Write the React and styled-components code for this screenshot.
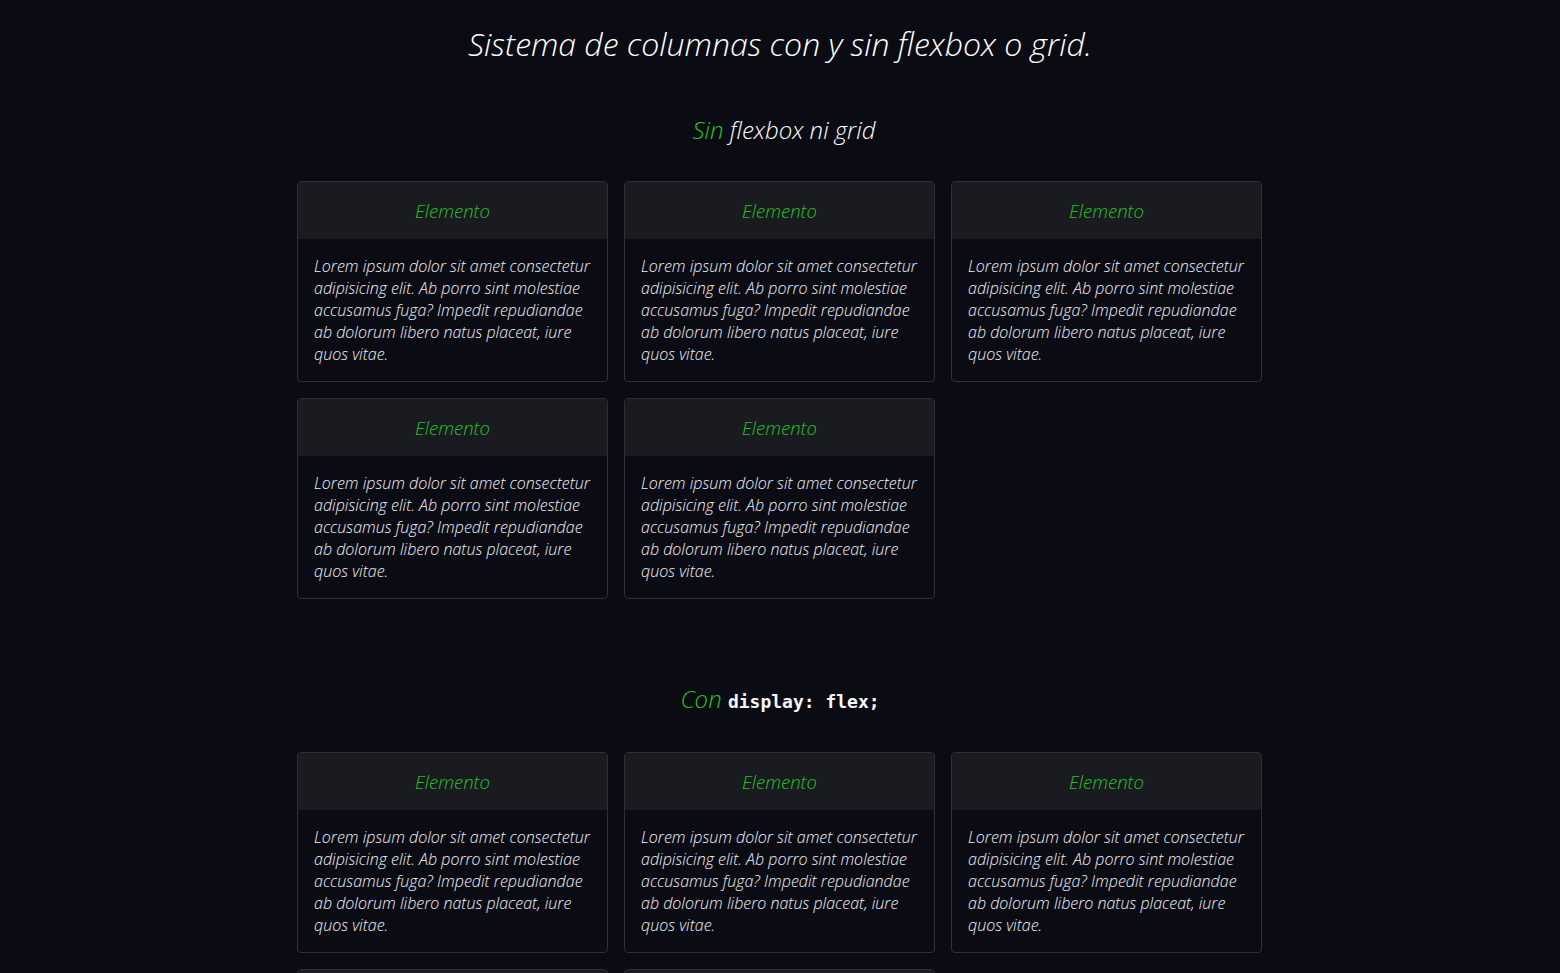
import React from "react";
import styled, { createGlobalStyle } from "styled-components";

const GlobalStyle = createGlobalStyle`
  * { box-sizing: border-box; }
  body {
    margin: 0;
    background: #0b0c13;
    color: #f2f3fa;
    font-family: "Open Sans", "Liberation Sans", sans-serif;
    font-weight: 300;
    font-style: italic;
  }
`;

const LOREM =
  "Lorem ipsum dolor sit amet consectetur adipisicing elit. Ab porro sint molestiae accusamus fuga? Impedit repudiandae ab dolorum libero natus placeat, iure quos vitae.";

const Page = styled.main`
  padding: 25px 0 40px;
`;

const Title = styled.h1`
  margin: 0 0 52px;
  font-size: 32px;
  line-height: 38px;
  font-weight: 300;
  text-align: center;
  color: #ffffff;
`;

const Section = styled.section`
  width: 966px;
  margin: 0 auto 69px;
`;

const Heading = styled.h2`
  margin: 0 0 ${(p) => (p.$code ? "35px" : "36px")};
  padding-left: ${(p) => (p.$code ? "0" : "8px")};
  font-size: 24px;
  line-height: 30px;
  font-weight: 300;
  text-align: center;
  color: #ffffff;
`;

const Green = styled.span`
  color: #20c420;
`;

const Code = styled.code`
  font-family: "DejaVu Sans Mono", "Liberation Mono", monospace;
  font-style: normal;
  font-weight: 700;
  font-size: 18px;
  color: #f5f6fc;
`;

const Columns = styled.div`
  display: ${(p) => (p.$flex ? "flex" : "block")};
  flex-wrap: wrap;
  gap: 16px;
  &::after {
    content: "";
    display: ${(p) => (p.$flex ? "none" : "table")};
    clear: both;
  }
`;

const Card = styled.article`
  width: 311px;
  float: ${(p) => (p.$flex ? "none" : "left")};
  margin: ${(p) => (p.$flex ? "0" : "0 16px 16px 0")};
  &:nth-child(3n) {
    margin-right: 0;
  }
  border: 1px solid #2e3036;
  border-radius: 4px;
  overflow: hidden;
  background: #0b0c13;
`;

const CardHead = styled.header`
  height: 57px;
  display: flex;
  align-items: center;
  justify-content: center;
  background: #1a1b21;
  color: #20c420;
  font-size: 18.5px;
`;

const CardBody = styled.p`
  margin: 0;
  padding: 16px 16px 16px;
  font-size: 16px;
  line-height: 22px;
`;

const Item = ({ flex }) => (
  <Card $flex={flex}>
    <CardHead>Elemento</CardHead>
    <CardBody>{LOREM}</CardBody>
  </Card>
);

export default function App() {
  const items = [1, 2, 3, 4, 5];
  return (
    <>
      <GlobalStyle />
      <Page>
        <Title>Sistema de columnas con y sin flexbox o grid.</Title>
        <Section>
          <Heading>
            <Green>Sin</Green> flexbox ni grid
          </Heading>
          <Columns>
            {items.map((i) => (
              <Item key={i} />
            ))}
          </Columns>
        </Section>
        <Section>
          <Heading $code>
            <Green>Con</Green> <Code>display: flex;</Code>
          </Heading>
          <Columns $flex>
            {items.map((i) => (
              <Item key={i} flex />
            ))}
          </Columns>
        </Section>
      </Page>
    </>
  );
}
